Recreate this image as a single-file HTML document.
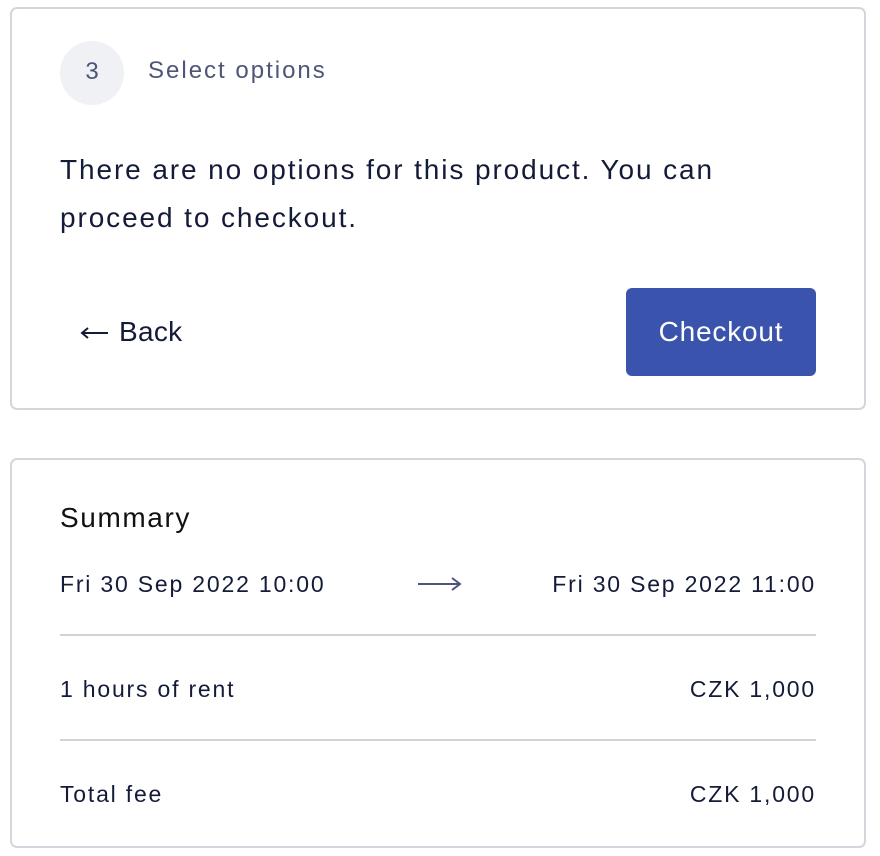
<!DOCTYPE html>
<html><head><style>
*{margin:0;padding:0;box-sizing:border-box}
body{width:880px;height:856px;background:#fff;font-family:"Liberation Sans",sans-serif;color:#141b38;position:relative;overflow:hidden}
.card{position:absolute;left:10px;width:856px;border:2px solid #d3d6dc;border-radius:7px;background:#fff}
.a{position:absolute;white-space:nowrap}
.hr{position:absolute;left:60px;width:756px;height:2px;background:#d0d3d9}
.s{font-size:23px;letter-spacing:1.8px}
</style></head><body>
<div class="card" style="top:7px;height:403px"></div>
<div class="card" style="top:458px;height:390px"></div>
<div class="a" style="left:60px;top:41px;width:64px;height:64px;border-radius:50%;background:#f0f1f4;color:#4d5678;font-size:24px;line-height:62px;text-align:center">3</div>
<div class="a" style="left:148px;top:57px;font-size:24px;color:#4d5678;letter-spacing:2px">Select options</div>
<div class="a" style="left:60px;top:146px;font-size:28px;line-height:48px;letter-spacing:1.9px;white-space:normal;width:780px">There are no options for this product. You can<br>proceed to checkout.</div>
<svg class="a" style="left:80px;top:326px" width="30" height="14"><path d="M28 7H2M8 2L2 7L8 12" stroke="#141b38" stroke-width="2" fill="none"/></svg>
<div class="a" style="left:119px;top:316px;font-size:28px;letter-spacing:0.3px">Back</div>
<div class="a" style="left:626px;top:288px;width:190px;height:88px;border-radius:6px;background:#3a53ad;color:#fff;font-size:28px;letter-spacing:0.8px;line-height:88px;text-align:center">Checkout</div>
<div class="a" style="left:60px;top:502px;font-size:28px;letter-spacing:1.6px;color:#111">Summary</div>
<div class="a s" style="left:60px;top:571px">Fri 30 Sep 2022 10:00</div>
<svg class="a" style="left:416px;top:576px" width="46" height="16"><path d="M2 8H44M36 2L44 8L36 14" stroke="#4d5678" stroke-width="2" fill="none"/></svg>
<div class="a s" style="right:62px;top:571px;margin-right:2px">Fri 30 Sep 2022 11:00</div>
<div class="hr" style="top:634px"></div>
<div class="a s" style="left:60px;top:676px">1 hours of rent</div>
<div class="a s" style="right:64px;top:676px">CZK 1,000</div>
<div class="hr" style="top:739px"></div>
<div class="a s" style="left:60px;top:781px">Total fee</div>
<div class="a s" style="right:64px;top:781px">CZK 1,000</div>
</body></html>
